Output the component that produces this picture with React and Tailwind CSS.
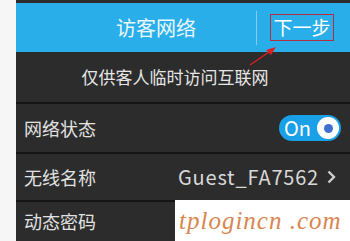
export default function App() {
  return (
    <div className="flex h-[241px] w-[350px] overflow-hidden bg-white" style={{ fontFamily: '"Noto Sans CJK SC", "Noto Sans", sans-serif' }}>
      <div className="w-[16px] shrink-0 bg-[#f6f6f6]" />
      <div className="relative flex flex-1 flex-col bg-[#2c2c2c] pt-[3px]">
        <div className="flex h-[49px] items-center bg-[#2aaee9]">
          <div className="flex-1 pl-[40px] text-center text-[20px] text-white/90">访客网络</div>
          <div className="h-[34px] w-px bg-white/40" />
          <div className="ml-[13px] mr-[16px] flex h-[27px] w-[64px] items-center justify-center border border-[#b03040] text-[19px] text-white">
            下一步
          </div>
        </div>
        <div className="flex h-[50px] items-center justify-center pr-[16px] text-[17px] text-[#e6e6e6]">仅供客人临时访问互联网</div>
        <div className="h-[2px] bg-[#151515]" />
        <div className="flex h-[48px] items-center justify-between pl-[8px] pr-[9px]">
          <span className="text-[18px] text-[#e2e2e2]">网络状态</span>
          <div className="flex h-[26px] w-[62px] items-center justify-between rounded-full bg-[#1aa0e6] pl-[5px] pr-[2px]">
            <span className="text-[20px] leading-none text-white">On</span>
            <span className="flex h-[22px] w-[22px] items-center justify-center rounded-full bg-white">
              <span className="h-[9px] w-[9px] rounded-full bg-[#3f6fd0]" />
            </span>
          </div>
        </div>
        <div className="h-[2px] bg-[#151515]" />
        <div className="flex h-[46px] items-center justify-between pl-[8px] pr-[14px]">
          <span className="text-[18px] text-[#e2e2e2]">无线名称</span>
          <span className="flex items-center gap-[8px] text-[20px] tracking-[0.8px] text-[#d8d8d8]">
            Guest_FA7562
            <svg width="9" height="14" viewBox="0 0 9 14" fill="none" stroke="#cfcfcf" strokeWidth="2.4">
              <path d="M1.5 1.5 L7 7 L1.5 12.5" />
            </svg>
          </span>
        </div>
        <div className="h-[2px] bg-[#151515]" />
        <div className="flex flex-1 items-center pl-[8px]">
          <span className="text-[18px] text-[#e2e2e2]">动态密码</span>
        </div>
        <div className="absolute bottom-0 right-0 flex h-[41px] w-[175px] items-center bg-white pl-[4px]">
          <span className="whitespace-nowrap text-[25px] italic tracking-[1px] text-[#d98650]" style={{ fontFamily: '"Liberation Serif", serif' }}>
            tplogincn .com
          </span>
        </div>
        <svg className="absolute left-[232px] top-[45px]" width="30" height="22" viewBox="0 0 30 22">
          <path d="M2 20 L21 7" stroke="#e02020" strokeWidth="1.2" />
          <path d="M28 2 L18 5 L23 10 Z" fill="#e02020" />
        </svg>
      </div>
    </div>
  );
}
